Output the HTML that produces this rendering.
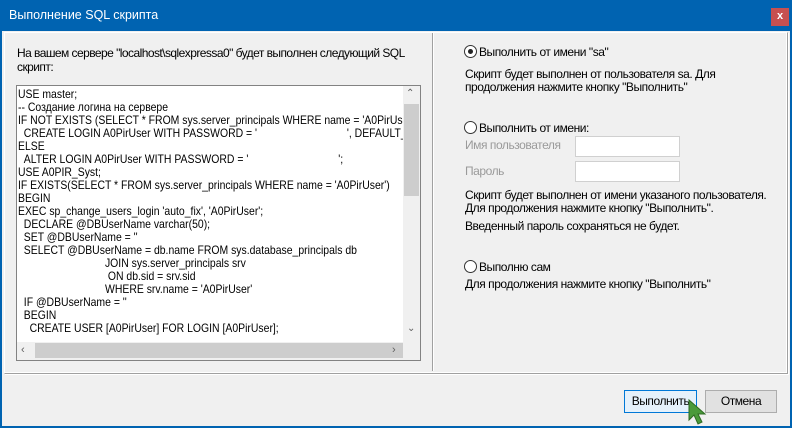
<!DOCTYPE html>
<html><head><meta charset="utf-8"><style>
*{margin:0;padding:0;box-sizing:border-box}
body{width:792px;height:428px;background:#f0f0f0;font-family:"Liberation Sans",sans-serif;font-size:12px;color:#000;position:relative;overflow:hidden;letter-spacing:-0.45px}
.a{position:absolute;white-space:nowrap}
.title{left:0;top:0;width:792px;height:31px;background:#0063b1}
.title span{position:absolute;left:9px;top:8px;color:#fff;font-size:12.5px;letter-spacing:0}
.close{left:771px;top:8px;width:18px;height:18px;background:#c75050;color:#fff;font-size:11px;font-weight:bold;text-align:center;line-height:17px;letter-spacing:0}
.bl{left:0;top:0;width:2px;height:428px;background:#0063b1}
.br{left:790px;top:0;width:2px;height:428px;background:#0063b1}
.bb{left:0;top:426px;width:792px;height:2px;background:#0063b1}
.panel{left:4px;top:32px;width:784px;height:342px;border-top:1px solid #fff;border-left:1px solid #fff;border-right:1px solid #a0a0a0;border-bottom:1px solid #a0a0a0;box-shadow:inset -1px -1px 0 #fff, 1px 1px 0 #fff}
.vdiv{left:432px;top:33px;width:1px;height:338px;background:#a0a0a0}
.vdiv2{left:433px;top:33px;width:1px;height:338px;background:#fff}
.ta{left:16px;top:85px;width:405px;height:276px;background:#fff;border:1px solid #828282}
.clip{left:17px;top:86px;width:386px;height:256px;overflow:hidden}
.code{position:absolute;left:1px;top:2px;line-height:13px;font-size:11.6px;letter-spacing:0;white-space:nowrap;transform:scaleX(0.9);transform-origin:0 0}
.vs{left:403px;top:86px;width:17px;height:256px;background:#f0f0f0}
.vt{left:404px;top:104px;width:15px;height:92px;background:#cdcdcd}
.hs{left:17px;top:342px;width:386px;height:18px;background:#f0f0f0}
.ht{left:35px;top:343px;width:368px;height:15px;background:#cdcdcd}
.corner{left:403px;top:342px;width:17px;height:18px;background:#f0f0f0}
.radio{width:13px;height:13px;border:1px solid #333;border-radius:50%;background:#fff}
.dot{left:3px;top:3px;width:5px;height:5px;border-radius:50%;background:#222;position:absolute}
.gray{color:#9a9a9a}
.inp{width:105px;height:21px;background:#fff;border:1px solid #d0d0d0}
.btn{height:23px;border:1px solid #adadad;background:#e1e1e1;text-align:center;line-height:21px}
</style></head><body>
<div class="a title"><span>Выполнение SQL скрипта</span></div>
<div class="a close">x</div>
<div class="a panel"></div>
<div class="a vdiv"></div><div class="a vdiv2"></div>
<div class="a" style="left:17px;top:46px;line-height:14px;letter-spacing:-0.55px">На вашем сервере "localhost\sqlexpressa0" будет выполнен следующий SQL<br>скрипт:</div>
<div class="a ta"></div>
<div class="a clip"><div class="code">USE master;<br>-- Создание логина на сервере<br>IF NOT EXISTS (SELECT * FROM sys.server_principals WHERE name = 'A0PirUser')<br>&nbsp;&nbsp;CREATE LOGIN A0PirUser WITH PASSWORD = '&nbsp;&nbsp;&nbsp;&nbsp;&nbsp;&nbsp;&nbsp;&nbsp;&nbsp;&nbsp;&nbsp;&nbsp;&nbsp;&nbsp;&nbsp;&nbsp;&nbsp;&nbsp;&nbsp;&nbsp;&nbsp;&nbsp;&nbsp;&nbsp;&nbsp;&nbsp;&nbsp;&nbsp;&nbsp;&nbsp;&nbsp;', DEFAULT_DATABASE<br>ELSE<br>&nbsp;&nbsp;ALTER LOGIN A0PirUser WITH PASSWORD = '&nbsp;&nbsp;&nbsp;&nbsp;&nbsp;&nbsp;&nbsp;&nbsp;&nbsp;&nbsp;&nbsp;&nbsp;&nbsp;&nbsp;&nbsp;&nbsp;&nbsp;&nbsp;&nbsp;&nbsp;&nbsp;&nbsp;&nbsp;&nbsp;&nbsp;&nbsp;&nbsp;&nbsp;&nbsp;&nbsp;&nbsp;';<br>USE A0PIR_Syst;<br>IF EXISTS(SELECT * FROM sys.server_principals WHERE name = 'A0PirUser')<br>BEGIN<br>EXEC sp_change_users_login 'auto_fix', 'A0PirUser';<br>&nbsp;&nbsp;DECLARE @DBUserName varchar(50);<br>&nbsp;&nbsp;SET @DBUserName = ''<br>&nbsp;&nbsp;SELECT @DBUserName = db.name FROM sys.database_principals db<br>&nbsp;&nbsp;&nbsp;&nbsp;&nbsp;&nbsp;&nbsp;&nbsp;&nbsp;&nbsp;&nbsp;&nbsp;&nbsp;&nbsp;&nbsp;&nbsp;&nbsp;&nbsp;&nbsp;&nbsp;&nbsp;&nbsp;&nbsp;&nbsp;&nbsp;&nbsp;&nbsp;&nbsp;&nbsp;&nbsp;JOIN sys.server_principals srv<br>&nbsp;&nbsp;&nbsp;&nbsp;&nbsp;&nbsp;&nbsp;&nbsp;&nbsp;&nbsp;&nbsp;&nbsp;&nbsp;&nbsp;&nbsp;&nbsp;&nbsp;&nbsp;&nbsp;&nbsp;&nbsp;&nbsp;&nbsp;&nbsp;&nbsp;&nbsp;&nbsp;&nbsp;&nbsp;&nbsp;&nbsp;ON db.sid = srv.sid<br>&nbsp;&nbsp;&nbsp;&nbsp;&nbsp;&nbsp;&nbsp;&nbsp;&nbsp;&nbsp;&nbsp;&nbsp;&nbsp;&nbsp;&nbsp;&nbsp;&nbsp;&nbsp;&nbsp;&nbsp;&nbsp;&nbsp;&nbsp;&nbsp;&nbsp;&nbsp;&nbsp;&nbsp;&nbsp;&nbsp;WHERE srv.name = 'A0PirUser'<br>&nbsp;&nbsp;IF @DBUserName = ''<br>&nbsp;&nbsp;BEGIN<br>&nbsp;&nbsp;&nbsp;&nbsp;CREATE USER [A0PirUser] FOR LOGIN [A0PirUser];</div></div>
<div class="a vs"></div><div class="a vt"></div>
<div class="a" style="left:406px;top:88px;font-size:10px;color:#606060">&#8963;</div>
<div class="a" style="left:407px;top:323px;font-size:10px;color:#606060">&#8964;</div>
<div class="a hs"></div><div class="a ht"></div><div class="a corner"></div>
<div class="a" style="left:21px;top:344px;font-size:11px;color:#606060">&lsaquo;</div>
<div class="a" style="left:392px;top:344px;font-size:11px;color:#606060">&rsaquo;</div>

<div class="a radio" style="left:464px;top:45px"><div class="dot"></div></div>
<div class="a" style="left:479px;top:45px">Выполнить от имени "sa"</div>
<div class="a" style="left:465px;top:68px;line-height:13px">Скрипт будет выполнен от пользователя sa. Для<br>продолжения нажмите кнопку "Выполнить"</div>
<div class="a radio" style="left:464px;top:121px"></div>
<div class="a" style="left:479px;top:121px">Выполнить от имени:</div>
<div class="a gray" style="left:465px;top:138px">Имя пользователя</div>
<div class="a inp" style="left:575px;top:136px"></div>
<div class="a gray" style="left:465px;top:164px">Пароль</div>
<div class="a inp" style="left:575px;top:161px"></div>
<div class="a" style="left:465px;top:189px;line-height:13px">Скрипт будет выполнен от имени указаного пользователя.<br>Для продолжения нажмите кнопку "Выполнить".</div>
<div class="a" style="left:465px;top:219px">Введенный пароль сохраняться не будет.</div>
<div class="a radio" style="left:464px;top:260px"></div>
<div class="a" style="left:479px;top:260px">Выполню сам</div>
<div class="a" style="left:465px;top:277px">Для продолжения нажмите кнопку "Выполнить"</div>

<div class="a btn" style="left:624px;top:390px;width:73px;background:#e5f1fb;border-color:#0078d7">Выполнить</div>
<div class="a btn" style="left:705px;top:390px;width:72px">Отмена</div>
<svg class="a" style="left:686px;top:398px" width="30" height="30"><path d="M3 2 L3 22 L8 17 L12 26 L16 24 L12 16 L19 16 Z" fill="#4a9a3a" stroke="#2e6b22" stroke-width="1"/></svg>
<div class="a bl"></div><div class="a br"></div><div class="a bb"></div>
</body></html>
